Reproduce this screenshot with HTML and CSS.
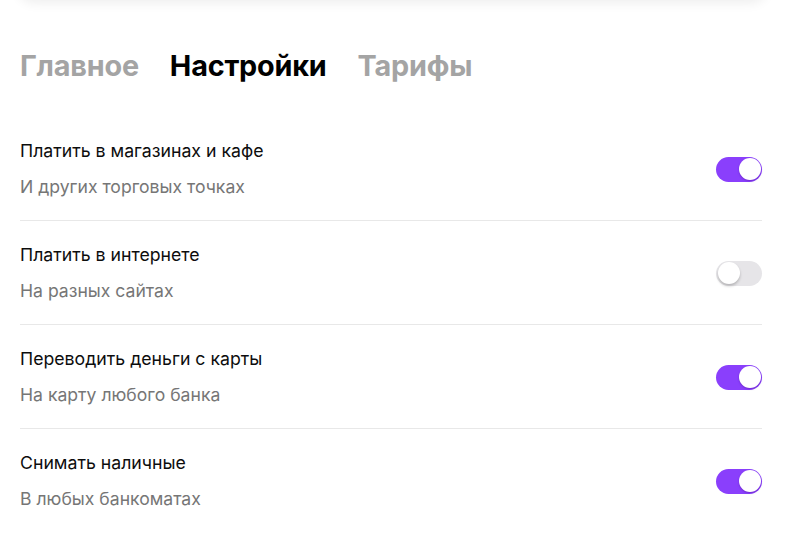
FILE: index.html
```html
<!DOCTYPE html>
<html lang="ru">
<head>
<meta charset="utf-8">
<title>Настройки карты</title>
<link rel="stylesheet" href="styles.css">
</head>
<body>
<div class="top-card"></div>
<main class="page">
  <nav class="tabs">
    <span class="tab">Главное</span>
    <span class="tab active">Настройки</span>
    <span class="tab">Тарифы</span>
  </nav>
  <ul class="settings">
    <li class="row">
      <div class="text">
        <div class="title">Платить в магазинах и кафе</div>
        <div class="sub">И других торговых точках</div>
      </div>
      <span class="switch on"><span class="knob"></span></span>
    </li>
    <li class="row">
      <div class="text">
        <div class="title">Платить в интернете</div>
        <div class="sub">На разных сайтах</div>
      </div>
      <span class="switch"><span class="knob"></span></span>
    </li>
    <li class="row">
      <div class="text">
        <div class="title">Переводить деньги с карты</div>
        <div class="sub">На карту любого банка</div>
      </div>
      <span class="switch on"><span class="knob"></span></span>
    </li>
    <li class="row last">
      <div class="text">
        <div class="title">Снимать наличные</div>
        <div class="sub">В любых банкоматах</div>
      </div>
      <span class="switch on"><span class="knob"></span></span>
    </li>
  </ul>
</main>
</body>
</html>
```
FILE: styles.css
```css
* { box-sizing: border-box; }
html, body {
  margin: 0;
  padding: 0;
  background: #ffffff;
  overflow: hidden;
}
body {
  font-family: Inter, "Noto Sans", "Liberation Sans", sans-serif;
  color: #000;
}
.top-card {
  height: 20px;
  margin: -20px 28px 0 18px;
  background: #fff;
  border-radius: 0 0 16px 16px;
  box-shadow: 0 3px 12px rgba(0, 0, 0, 0.07);
}
.page {
  padding: 48px 33px 0 20px;
}
.tabs {
  display: flex;
  gap: 31px;
  height: 36px;
  align-items: center;
  margin-bottom: 33px;
}
.tab {
  font-size: 28.8px;
  font-weight: 700;
  line-height: 36px;
  color: #a4a4a4;
  letter-spacing: -0.2px;
}
.tab.active { color: #000; }
.settings {
  list-style: none;
  margin: 0;
  padding: 0;
}
.row {
  display: flex;
  align-items: center;
  justify-content: space-between;
  padding: 22px 0 21px;
  border-bottom: 1px solid #e8e8e8;
}
.row.last { border-bottom: none; }
.text {
  display: flex;
  flex-direction: column;
  gap: 12px;
}
.title {
  font-size: 17.7px;
  line-height: 24px;
  color: #0d0d0d;
}
.sub {
  font-size: 17.6px;
  line-height: 24px;
  color: #767676;
}
.switch {
  position: relative;
  width: 46px;
  height: 25px;
  border-radius: 12.5px;
  background: #e6e5e8;
  flex: none;
}
.switch.on { background: #8a3ffc; }
.knob {
  position: absolute;
  top: 1.5px;
  left: 1.5px;
  width: 22px;
  height: 22px;
  border-radius: 50%;
  background: #fff;
  box-shadow: 0 2px 3px rgba(0, 0, 0, 0.22);
}
.switch.on .knob {
  left: 22.5px;
  box-shadow: 0 1px 2px rgba(60, 0, 120, 0.35);
}
```
